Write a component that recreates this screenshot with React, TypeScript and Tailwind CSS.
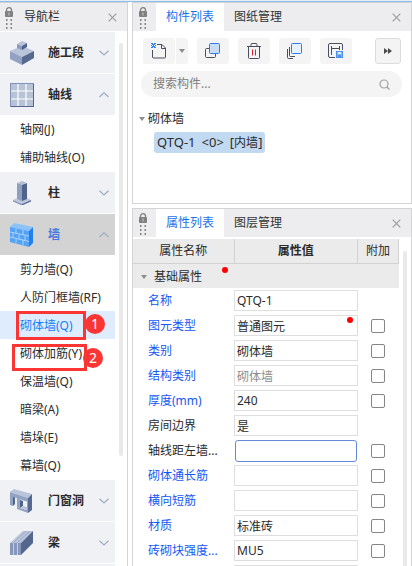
import type { ReactNode } from "react";
import clsx from "clsx";

/* ================= ICONS ================= */

const LockGrip = () => (
  <svg width="10" height="24" viewBox="0 0 10 24" className="shrink-0" aria-hidden="true">
    <path d="M2.5 5V3.2a2.5 2.5 0 0 1 5 0V5" fill="none" stroke="#808080" strokeWidth="1.3" />
    <rect x="1" y="4" width="8" height="6" rx="1" fill="#808080" />
    <rect x="4.5" y="5.5" width="1" height="3" fill="#c8c8c8" />
    <path
      d="M2 12h1.500v2H2zM6.500 12H8v2H6.500zM2 16h1.500v2H2zM6.500 16H8v2H6.500zM2 20h1.500v2H2zM6.500 20H8v2H6.500z"
      fill="#858585"
    />
  </svg>
);

const CloseIcon = () => (
  <svg width="9" height="9" viewBox="0 0 9 9" aria-hidden="true">
    <path d="M.7.7l7.6 7.6M8.3.7L.7 8.3" stroke="#9c9c9c" strokeWidth="1.2" />
  </svg>
);

const Chevron = ({ open }: { open: boolean }) => (
  <svg width="10" height="6" viewBox="0 0 10 6" fill="none" stroke="#9fabc2" aria-hidden="true">
    <path d={open ? "M.5 5L5 .8 9.500 5" : "M.5 .8L5 5 9.500 .8"} strokeWidth="1.2" />
  </svg>
);

const Caret = () => (
  <svg width="6" height="4" viewBox="0 0 6 4" className="shrink-0" aria-hidden="true">
    <path d="M0 0h6L3 4z" fill="#8c8c8c" />
  </svg>
);

const Icon24 = ({ children }: { children: ReactNode }) => (
  <svg width="24" height="24" viewBox="0 0 24 24" className="shrink-0" aria-hidden="true">
    {children}
  </svg>
);

const StageIcon = () => (
  <Icon24>
    <path d="M0 10l12-5 12 5-12 6z" fill="#b9c4da" />
    <path d="M0 10l12 6v8L0 18z" fill="#93a2c3" />
    <path d="M24 10l-12 6v8l12-7z" fill="#566a91" />
    <path d="M7 3l5-3 5 2-5 3z" fill="#b9c4da" />
    <path d="M7 3l5 2v4L7 7z" fill="#8a9abd" />
    <path d="M17 2l-5 3v4l5-3z" fill="#4d628c" />
  </Icon24>
);

const GridIcon = () => (
  <Icon24>
    <rect x=".5" y=".5" width="23" height="23" fill="#b9c3d8" stroke="#8292b8" />
    <path d="M23.500 1v22.500H1" fill="none" stroke="#52668f" />
    <path d="M8 1v22M16 1v22M1 8h22M1 16h22" stroke="#fff" strokeWidth="1.2" />
  </Icon24>
);

const ColumnIcon = () => (
  <Icon24>
    <path d="M3 19l9-4 9 4-9 4z" fill="#bcc7db" />
    <path d="M3 19l9 4v1.500L3 20.500z" fill="#8494b8" />
    <path d="M21 19l-9 4v1.500l9-4z" fill="#566a91" />
    <path d="M7 2l5 1.500V20l-5-2z" fill="#8f9fc1" />
    <path d="M17 2l-5 1.500V20l5-2z" fill="#4f638b" />
    <path d="M7 2l5-2 5 2-5 2z" fill="#b4bfd6" />
  </Icon24>
);

const WallIcon = () => (
  <Icon24>
    <path d="M0 4l4-4 19 4-4 4z" fill="#8bc3f8" />
    <path d="M0 4l19 4v16L0 19z" fill="#55a3f5" />
    <path d="M23 4l-4 4v16l4-4z" fill="#2080f0" />
    <path
      d="M0 9l19 4M0 14l19 4.500M6 5.500V10M13 7v5M3 10v5M9 11.500V16M15 12.500V17.500M6 15.500V20M13 17v5"
      fill="none"
      stroke="#a9d2fb"
    />
  </Icon24>
);

const OpeningIcon = () => (
  <Icon24>
    <path d="M0 3l4-3 18 5-4 4z" fill="#b9c4da" />
    <path d="M0 3l18 6v4L0 7z" fill="#93a3c4" />
    <path d="M0 6l3 1v10l-3-1z" fill="#93a3c4" />
    <path d="M3 8l2 .5V15l-2 2z" fill="#4f638b" />
    <path d="M7 9l3 1v9l7 2V12l1-1v13L7 20z" fill="#93a3c4" />
    <path d="M10 11l3 1v5l-3 2z" fill="#4f638b" />
    <path d="M10 19l3-2 4 1v3z" fill="#b9c4da" />
    <path d="M22 5l-4 4v15l4-3z" fill="#566a91" />
  </Icon24>
);

const BeamIcon = () => (
  <Icon24>
    <path d="M0 12L13 0h10L11 12z" fill="#b9c4da" />
    <path d="M3 12L16 0M7 12L20 0" stroke="#9dabc9" />
    <path d="M0 12h11v12H0z" fill="#8797bb" />
    <path d="M3.500 12v12M7.500 12v12" stroke="#c3cce0" />
    <path d="M11 12L23 0v12L11 24z" fill="#52668e" />
  </Icon24>
);

const NewIcon = () => (
  <svg width="16" height="16" viewBox="0 0 16 16" fill="none" aria-hidden="true">
    <path d="M6 1.500h5L14.500 5v9a1 1 0 0 1-1 1h-11a1 1 0 0 1-1-1V7" stroke="#4a4f5c" />
    <path d="M10.500 1.500V5.500h4" stroke="#4a4f5c" />
    <path
      d="M0 0h2v1H0zM3 0h2v1H3zM1 1h3v1H1zM0 2h1v1H0zM2 2h1v1H2zM4 2h1v1H4zM1 3h3v1H1zM0 4h2v1H0zM3 4h2v1H3z"
      fill="#2f80e8"
    />
  </svg>
);

const CopyIcon = () => (
  <svg width="16" height="16" viewBox="0 0 16 16" aria-hidden="true">
    <rect x=".5" y="5.500" width="10" height="9" rx="1" fill="none" stroke="#4a4f5c" />
    <rect x="4.500" y=".5" width="10" height="10" rx="1" fill="#c8dcf5" stroke="#2c7ee6" />
  </svg>
);

const DeleteIcon = () => (
  <svg width="14" height="16" viewBox="0 0 14 16" fill="none" aria-hidden="true">
    <path
      d="M0 3.500h14M4 3V1.500a1 1 0 0 1 1-1h4a1 1 0 0 1 1 1V3M1.500 4v10.500a1 1 0 0 0 1 1h9a1 1 0 0 0 1-1V4"
      stroke="#4a4f5c"
    />
    <path d="M5.500 6.500v6M8.500 6.500v6" stroke="#e0202c" />
  </svg>
);

const LayerCopyIcon = () => (
  <svg width="16" height="16" viewBox="0 0 16 16" fill="none" aria-hidden="true">
    <path d="M.5 6v8.500a1 1 0 0 0 1 1H6M2.500 4v8.500a1 1 0 0 0 1 1H8" stroke="#4a4f5c" />
    <rect x="4.500" y=".5" width="10" height="10" rx="1" fill="#e6f1fe" stroke="#2c7ee6" />
  </svg>
);

const StoreIcon = () => (
  <svg width="16" height="16" viewBox="0 0 16 16" fill="none" aria-hidden="true">
    <path
      d="M7 14.500H2a1.500 1.500 0 0 1-1.500-1.500V2A1.500 1.500 0 0 1 2 .5h11A1.500 1.500 0 0 1 14.500 2v5"
      stroke="#4a4f5c"
    />
    <path d="M3.500 3v9M3.500 5.500h8M11.500 3v4" stroke="#4a4f5c" />
    <rect x="8.500" y="8.500" width="6" height="6" fill="#8ab8f3" stroke="#4a90ea" />
    <path d="M10 9h3v2h-3z" fill="#e2eefc" />
    <path d="M10 12h3v2h-3z" fill="#4a90ea" />
  </svg>
);

/* ================= DATA ================= */

type Category = {
  name: string;
  icon: ReactNode;
  items?: string[];
  active?: boolean;
};

const categories: Category[] = [
  { name: "施工段", icon: <StageIcon /> },
  { name: "轴线", icon: <GridIcon />, items: ["轴网(J)", "辅助轴线(O)"] },
  { name: "柱", icon: <ColumnIcon /> },
  {
    name: "墙",
    icon: <WallIcon />,
    active: true,
    items: [
      "剪力墙(Q)",
      "人防门框墙(RF)",
      "砌体墙(Q)",
      "砌体加筋(Y)",
      "保温墙(Q)",
      "暗梁(A)",
      "墙垛(E)",
      "幕墙(Q)",
    ],
  },
  { name: "门窗洞", icon: <OpeningIcon /> },
  { name: "梁", icon: <BeamIcon /> },
];

type Property = {
  name: string;
  value: string;
  blue?: boolean;
  check?: boolean;
  disabled?: boolean;
  focus?: boolean;
  dot?: boolean;
};

const properties: Property[] = [
  { name: "名称", value: "QTQ-1", blue: true },
  { name: "图元类型", value: "普通图元", blue: true, check: true, dot: true },
  { name: "类别", value: "砌体墙", blue: true, check: true },
  { name: "结构类别", value: "砌体墙", blue: true, check: true, disabled: true },
  { name: "厚度(mm)", value: "240", blue: true, check: true },
  { name: "房间边界", value: "是" },
  { name: "轴线距左墙...", value: "", check: true, focus: true },
  { name: "砌体通长筋", value: "", blue: true, check: true },
  { name: "横向短筋", value: "", blue: true, check: true },
  { name: "材质", value: "标准砖", blue: true, check: true },
  { name: "砖砌块强度...", value: "MU5", blue: true, check: true },
  { name: "", value: "" },
];

/* ================= PARTS ================= */

function PanelTabs({ tabs }: { tabs: string[] }) {
  return (
    <div className="flex h-7 shrink-0 items-stretch bg-[#ededf0] pr-[10px]">
      <div className="flex w-[23px] items-end pl-[5px]">
        <LockGrip />
      </div>
      {tabs.map((tab, i) => (
        <button
          key={tab}
          type="button"
          className={clsx("w-[68px]", i === 0 ? "bg-white text-[#1a73e8]" : "text-[#333]")}
        >
          {tab}
        </button>
      ))}
      <button type="button" aria-label="关闭" className="ml-auto self-center">
        <CloseIcon />
      </button>
    </div>
  );
}

function ToolButton({ label, children }: { label: string; children: ReactNode }) {
  return (
    <button
      type="button"
      aria-label={label}
      className="flex h-[26px] w-8 items-center justify-center rounded-[3px] bg-[#f4f4f4]"
    >
      {children}
    </button>
  );
}

function Step({ n, box, badge }: { n: number; box: string; badge: string }) {
  return (
    <>
      <span className={clsx("pointer-events-none absolute border-3 border-[#fb3434]", box)} />
      <span
        className={clsx(
          "absolute flex size-5 items-center justify-center rounded-full bg-[#fb3434] text-sm text-white",
          badge
        )}
      >
        {n}
      </span>
    </>
  );
}

function NavPanel() {
  return (
    <aside className="flex w-32 shrink-0 flex-col border-t border-r border-[#d4d4d6]">
      <div className="flex h-7 shrink-0 items-center bg-[#ededf0] pr-[10px] pl-1">
        <div className="self-end">
          <LockGrip />
        </div>
        <h2 className="ml-[10px]">导航栏</h2>
        <button type="button" aria-label="关闭" className="ml-auto">
          <CloseIcon />
        </button>
      </div>
      <div className="flex min-h-0 flex-1">
        <nav className="flex min-w-0 flex-1 flex-col overflow-hidden">
          {categories.map((cat) => (
            <div key={cat.name} className="shrink-0">
              <button
                type="button"
                aria-expanded={!!cat.items}
                className={clsx(
                  "mt-px flex h-[41px] w-full items-center pr-[6px] pl-[10px] font-bold",
                  cat.active ? "bg-[#d3d3d3] text-[#4a7bdc]" : "bg-[#f0f1f5]"
                )}
              >
                {cat.icon}
                <span className="ml-[14px]">{cat.name}</span>
                <span className="ml-auto">
                  <Chevron open={!!cat.items} />
                </span>
              </button>
              {cat.items?.map((item) => (
                <a
                  key={item}
                  href="#"
                  className={clsx(
                    "relative flex h-7 items-center pt-0.5 pl-5 whitespace-nowrap",
                    item === "砌体墙(Q)" && "bg-[#deecfe] text-[#1280f8]"
                  )}
                >
                  {item}
                  {item === "砌体墙(Q)" && (
                    <Step n={1} box="top-0 left-4 h-[29px] w-[70px]" badge="top-[3px] left-[85px]" />
                  )}
                  {item === "砌体加筋(Y)" && (
                    <Step n={2} box="top-[5px] left-3 h-[27px] w-[75px]" badge="top-[9px] left-[83px]" />
                  )}
                </a>
              ))}
            </div>
          ))}
          <div className="mt-px flex-1 bg-[#f0f1f5]" />
        </nav>
        <div className="w-3 shrink-0 px-1 pt-3">
          <div className="h-[413px] rounded-full bg-[#e9e9e9]" />
        </div>
      </div>
    </aside>
  );
}

function ComponentPanel() {
  return (
    <section className="flex h-[202px] shrink-0 flex-col border border-[#d4d4d6]">
      <PanelTabs tabs={["构件列表", "图纸管理"]} />
      <div className="mt-[7px] flex gap-[9px] pr-[10px] pl-[10px]">
        <div className="flex gap-px">
          <ToolButton label="新建">
            <NewIcon />
          </ToolButton>
          <button
            type="button"
            aria-label="更多新建"
            className="flex h-[26px] w-3 items-center justify-center rounded-r-[3px] bg-[#f4f4f4]"
          >
            <Caret />
          </button>
        </div>
        <ToolButton label="复制">
          <CopyIcon />
        </ToolButton>
        <ToolButton label="删除">
          <DeleteIcon />
        </ToolButton>
        <ToolButton label="层间复制">
          <LayerCopyIcon />
        </ToolButton>
        <ToolButton label="存档">
          <StoreIcon />
        </ToolButton>
        <button
          type="button"
          aria-label="更多"
          className="ml-auto flex size-[26px] items-center justify-center rounded-[3px] border border-[#dcdcdc] bg-[#f4f4f4]"
        >
          <svg width="8" height="6" viewBox="0 0 8 6" fill="#4a4a4a" aria-hidden="true">
            <path d="M0 0l4 3-4 3zM4 0l4 3-4 3z" />
          </svg>
        </button>
      </div>
      <label className="mr-[9px] ml-2 mt-[7px] flex h-[26px] items-center rounded-full bg-[#f4f4f4] px-3">
        <input
          type="text"
          aria-label="搜索构件"
          placeholder="搜索构件..."
          className="min-w-0 flex-1 bg-transparent outline-none placeholder:text-[#808080]"
        />
        <svg width="11" height="11" viewBox="0 0 11 11" fill="none" stroke="#a0a0a0" aria-hidden="true">
          <circle cx="5" cy="5" r="4" strokeWidth="1.2" />
          <path d="M8 8l2.500 2.500" strokeWidth="1.4" />
        </svg>
      </label>
      <ul className="mt-3 pl-[6px]">
        <li>
          <div className="flex h-5 items-center gap-[3px]">
            <Caret />
            砌体墙
          </div>
          <button
            type="button"
            className="mt-[3px] ml-[15px] flex h-[21px] items-center gap-[6px] rounded-[3px] bg-[#c1d9f1] px-[3px] text-[13px]"
          >
            <span>QTQ-1</span>
            <span>&lt;0&gt;</span>
            <span>
              [<span className="text-xs">内墙</span>]
            </span>
          </button>
        </li>
      </ul>
    </section>
  );
}

function PropertyPanel() {
  return (
    <section className="mt-1 flex min-h-0 flex-1 flex-col border border-b-0 border-[#d4d4d6]">
      <PanelTabs tabs={["属性列表", "图层管理"]} />
      <div className="mt-0.5 flex min-h-0 flex-1 overflow-hidden">
        <div className="min-w-0 flex-1">
          <table className="w-full table-fixed border-collapse">
            <colgroup>
              <col className="w-[101px]" />
              <col />
              <col className="w-[41px]" />
            </colgroup>
            <thead>
              <tr className="h-6 bg-[#ebebeb]">
                <th className="border-r border-b border-[#d2d2d2] p-0 font-normal">属性名称</th>
                <th className="border-r border-b border-[#d2d2d2] p-0 font-bold">属性值</th>
                <th className="border-r border-b border-[#d2d2d2] p-0 font-normal">附加</th>
              </tr>
            </thead>
            <tbody>
              <tr className="h-[25px] bg-[#ebebeb]">
                <td colSpan={3} className="p-0 pl-2">
                  <span className="relative inline-flex items-center gap-[7px]">
                    <Caret />
                    基础属性
                    <span className="absolute -top-0.5 left-[81px] size-[6px] rounded-full bg-[#f00]" />
                  </span>
                </td>
              </tr>
              {properties.map((p, i) => (
                <tr key={i} className="h-[25px]">
                  <td className="p-0 pl-[15px] whitespace-nowrap">
                    <label htmlFor={`prop-${i}`} className={clsx(p.blue && "text-[#1457f5]")}>
                      {p.name}
                    </label>
                  </td>
                  <td className="p-0">
                    <div className="relative flex">
                      <input
                        id={`prop-${i}`}
                        type="text"
                        defaultValue={p.value}
                        disabled={p.disabled}
                        className={clsx(
                          "w-full border bg-white px-[2px] outline-none",
                          p.focus
                            ? "mx-px h-[22px] rounded-[3px] border-[#6389d8]"
                            : "h-[21px] border-[#dedede]",
                          p.disabled && "text-[#8c8c8c]"
                        )}
                      />
                      {p.dot && (
                        <span className="absolute top-[2px] right-[5px] size-[6px] rounded-full bg-[#f00]" />
                      )}
                    </div>
                  </td>
                  <td className="p-0">
                    {p.check && (
                      <input
                        type="checkbox"
                        aria-label={`${p.name} 附加`}
                        className="mx-auto block size-[14px] appearance-none rounded-[2px] border border-[#858585] bg-white"
                      />
                    )}
                  </td>
                </tr>
              ))}
            </tbody>
          </table>
        </div>
        <div className="w-3 shrink-0 px-1 pt-3">
          <div className="h-full rounded-t-full bg-[#e9e9e9]" />
        </div>
      </div>
    </section>
  );
}

export default function App() {
  return (
    <div className="flex h-screen flex-col overflow-hidden bg-white font-['Noto_Sans','Noto_Sans_CJK_SC',sans-serif] text-xs text-[#2b2b2b]">
      <div className="h-[2px] shrink-0 border-b border-[#84c0ec] bg-[#e8eef4]" />
      <div className="flex min-h-0 flex-1 gap-1">
        <NavPanel />
        <main className="flex min-w-0 flex-1 flex-col">
          <ComponentPanel />
          <PropertyPanel />
        </main>
      </div>
    </div>
  );
}
